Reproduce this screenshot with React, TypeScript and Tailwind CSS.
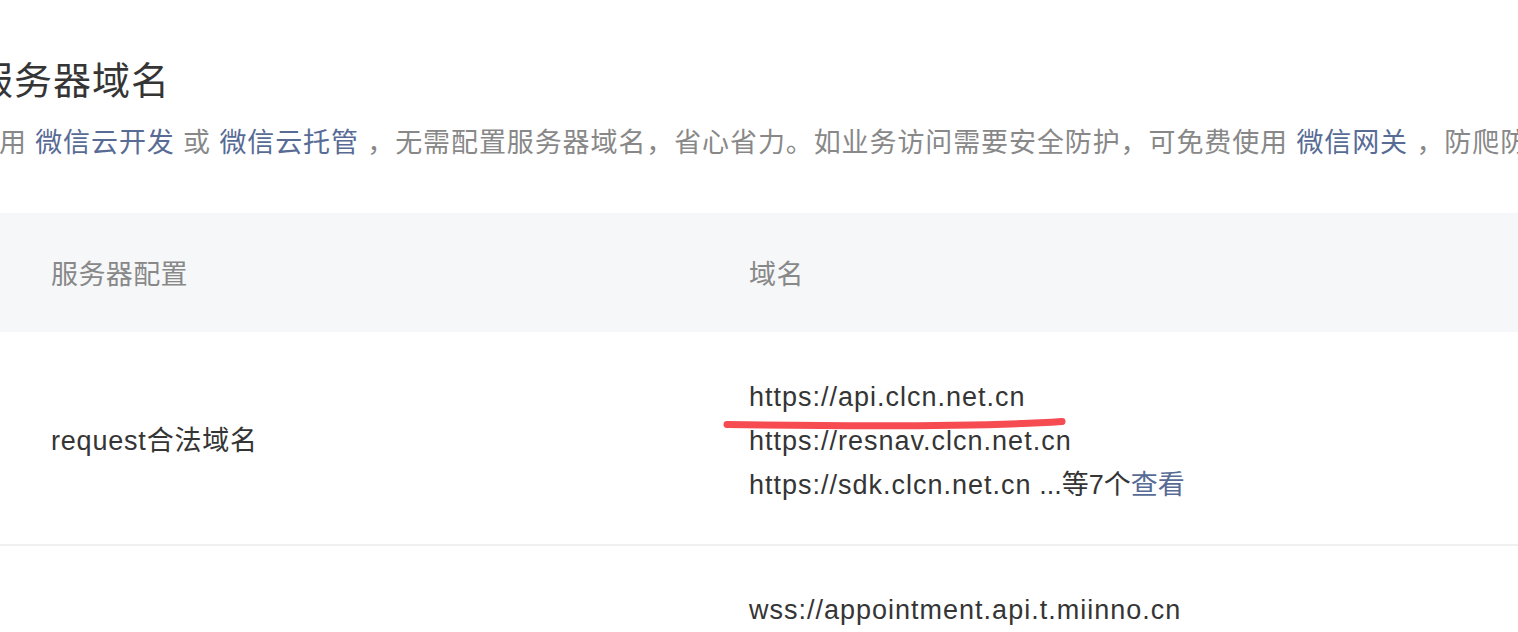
const cjk = '"Liberation Sans", "Noto Sans CJK SC", sans-serif';

function Link({ children }: { children: React.ReactNode }) {
  return <span className="text-[#576b95]">{children}</span>;
}

function DomainList({ items, more, marked }: { items: string[]; more?: number; marked?: boolean }) {
  return (
    <div className="relative">
      {items.map((d, i) => (
        <p key={d} className="h-[44px] leading-[44px] tracking-[1px] text-[#353535] whitespace-nowrap">
          {d}
          {more && i === items.length - 1 ? (
            <span className="tracking-normal">
              {" "}...等{more}个<Link>查看</Link>
            </span>
          ) : null}
        </p>
      ))}
      {marked && (
        <svg className="absolute left-[-29px] top-[38px]" width="350" height="20" viewBox="0 0 350 20">
          <path
            d="M7 11.5 C 100 13, 250 14.5, 342 8.5"
            fill="none"
            stroke="#f54b51"
            strokeWidth="7"
            strokeLinecap="round"
          />
        </svg>
      )}
    </div>
  );
}

export default function App() {
  return (
    <div className="w-[1518px] h-[632px] overflow-hidden bg-white" style={{ fontFamily: cjk }}>
      <div className="pt-[57px] whitespace-nowrap">
        <h1 className="ml-[-25px] text-[38px] leading-[48px] text-[#353535] font-normal tracking-[1px]">服务器域名</h1>
        <p className="ml-[-29px] mt-[18px] text-[27px] leading-[40px] text-[#888888] tracking-[0.9px]">
          使用 <Link>微信云开发</Link> 或 <Link>微信云托管</Link> ，无需配置服务器域名，省心省力。如业务访问需要安全防护，可免费使用{" "}
          <Link>微信网关</Link> ，防爬防刷防攻击
        </p>
      </div>

      <div className="mt-[50px] text-[27px]">
        <div className="grid grid-cols-[698px_1fr] h-[119px] items-center pt-[6px] bg-[#f6f7f9] text-[#888888] tracking-[0.4px]">
          <div className="pl-[51px]">服务器配置</div>
          <div className="pl-[51px]">域名</div>
        </div>

        <div className="grid grid-cols-[698px_1fr] items-center border-b-2 border-[#f0f0f0] pt-[43px] pb-[37px]">
          <div className="pl-[51px] text-[#353535] tracking-[0.8px]">request合法域名</div>
          <div className="pl-[51px]">
            <DomainList
              marked
              more={7}
              items={["https://api.clcn.net.cn", "https://resnav.clcn.net.cn", "https://sdk.clcn.net.cn"]}
            />
          </div>
        </div>

        <div className="grid grid-cols-[698px_1fr] items-start pt-[42px]">
          <div className="pl-[51px] text-[#353535]"></div>
          <div className="pl-[51px]">
            <DomainList items={["wss://appointment.api.t.miinno.cn", "wss://appointment.api.miinno.cn"]} />
          </div>
        </div>
      </div>
    </div>
  );
}
